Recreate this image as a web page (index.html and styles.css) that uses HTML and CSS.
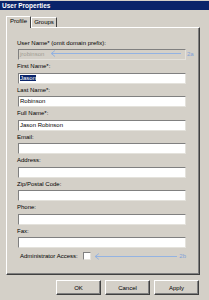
FILE: index.html
```html
<!DOCTYPE html>
<html lang="en">
<head>
    <meta charset="UTF-8">
    <title>User Properties</title>
    <link rel="stylesheet" href="styles.css">
</head>
<body>
    <div class="titlebar">User Properties</div>

    <div class="tabs">
        <div class="tab active">Profile</div>
        <div class="tab groups">Groups</div>
    </div>

    <div class="panel">
        <div class="field">
            <label>User Name* (omit domain prefix):</label>
            <div class="input-wrap">
                <div class="textbox disabled">jrobinson</div>
                <svg class="arrow arrow-a" width="131" height="7" viewBox="0 0 131 7">
                    <path d="M1 3.5 H131" />
                    <path d="M5 0.5 L1.2 3.5 L5 6.5" />
                </svg>
                <span class="tag tag-a">2a</span>
            </div>
        </div>
        <div class="field">
            <label>First Name*:</label>
            <div class="textbox"><span class="sel">Jason</span></div>
        </div>
        <div class="field">
            <label>Last Name*:</label>
            <div class="textbox">Robinson</div>
        </div>
        <div class="field">
            <label>Full Name*:</label>
            <div class="textbox">Jason Robinson</div>
        </div>
        <div class="field">
            <label>Email:</label>
            <div class="textbox"></div>
        </div>
        <div class="field">
            <label>Address:</label>
            <div class="textbox"></div>
        </div>
        <div class="field">
            <label>Zip/Postal Code:</label>
            <div class="textbox"></div>
        </div>
        <div class="field">
            <label>Phone:</label>
            <div class="textbox"></div>
        </div>
        <div class="field">
            <label>Fax:</label>
            <div class="textbox"></div>
        </div>

        <div class="admin">
            <span class="admin-label">Administrator Access:</span>
            <span class="checkbox"></span>
            <svg class="arrow arrow-b" width="85" height="7" viewBox="0 0 85 7">
                <path d="M1 3.5 H85" />
                <path d="M5 0.5 L1.2 3.5 L5 6.5" />
            </svg>
            <span class="tag">2b</span>
        </div>
    </div>

    <div class="buttons">
        <button class="btn">OK</button>
        <button class="btn">Cancel</button>
        <button class="btn">Apply</button>
    </div>
</body>
</html>
```

FILE: styles.css
```css
body {
    margin: 0;
    padding-top: 1px;
    width: 209px;
    height: 300px;
    box-sizing: border-box;
    overflow: hidden;
    background-color: #d4d0c8;
    font-family: "Liberation Sans", Arial, sans-serif;
    font-size: 6px;
    color: #000;
}

.titlebar {
    height: 9px;
    line-height: 9px;
    padding-left: 2px;
    background-color: #0a246a;
    color: #fff;
    font-size: 6.5px;
    font-weight: bold;
}

/* onglets */
.tabs {
    display: flex;
    align-items: flex-end;
    height: 11px;
    margin: 6px 0 0 6px;
}

.tab {
    box-sizing: border-box;
    border-top: 1px solid #fff;
    border-left: 1px solid #fff;
    border-right: 1px solid #404040;
    text-align: center;
    line-height: 9px;
}

.tab.active {
    width: 25px;
    height: 12px;
    margin-bottom: -1px;
    position: relative;
    z-index: 1;
    background-color: #d4d0c8;
}

.tab.groups {
    width: 26px;
    height: 10px;
}

.panel {
    box-sizing: border-box;
    height: 248px;
    margin: 0 9px 0 6px;
    padding: 8.5px 13px 0 10px;
    border: 1px solid;
    border-color: #fff #404040 #404040 #fff;
    box-shadow: inset -1px -1px 0 #808080;
}

.field {
    height: 23.5px;
}

.field label {
    display: block;
    height: 12.5px;
    padding-top: 1px;
    box-sizing: border-box;
    line-height: 11px;
}

.input-wrap {
    position: relative;
}

.textbox {
    box-sizing: border-box;
    height: 11px;
    margin-left: 1px;
    padding-left: 1px;
    line-height: 9px;
    background-color: #fff;
    border: 1px solid;
    border-color: #808080 #e4e2dc #e4e2dc #808080;
    white-space: nowrap;
}

.textbox.disabled {
    background-color: #d4d0c8;
    color: #a09c94;
}

.sel {
    background-color: #0a246a;
    color: #fff;
}

/* fleches d'annotation */
.arrow path {
    fill: none;
    stroke: #92b2e2;
    stroke-width: 1;
}

.arrow-a {
    position: absolute;
    left: 33px;
    top: 1px;
}

.tag {
    color: #7fa2da;
    line-height: 8px;
}

.tag-a {
    position: absolute;
    left: 170px;
    top: 1px;
}

.admin {
    display: flex;
    align-items: center;
    height: 8px;
    margin-top: 4px;
    padding-left: 3px;
}

.admin-label {
    width: 65px;
}

.checkbox {
    box-sizing: border-box;
    width: 8px;
    height: 8px;
    background-color: #fff;
    border: 1px solid;
    border-color: #808080 #e4e2dc #e4e2dc #808080;
}

.arrow-b {
    margin-left: 3px;
}

.arrow-b + .tag {
    margin-left: 2px;
}

.buttons {
    display: flex;
    justify-content: flex-end;
    gap: 4px;
    margin-top: 5px;
    padding-right: 10px;
}

.btn {
    box-sizing: border-box;
    width: 45px;
    height: 15px;
    padding: 0;
    font-family: "Liberation Sans", Arial, sans-serif;
    font-size: 6px;
    color: #000;
    background-color: #d4d0c8;
    border: 1px solid;
    border-color: #fff #404040 #404040 #fff;
    box-shadow: inset -1px -1px 0 #808080;
}
```
